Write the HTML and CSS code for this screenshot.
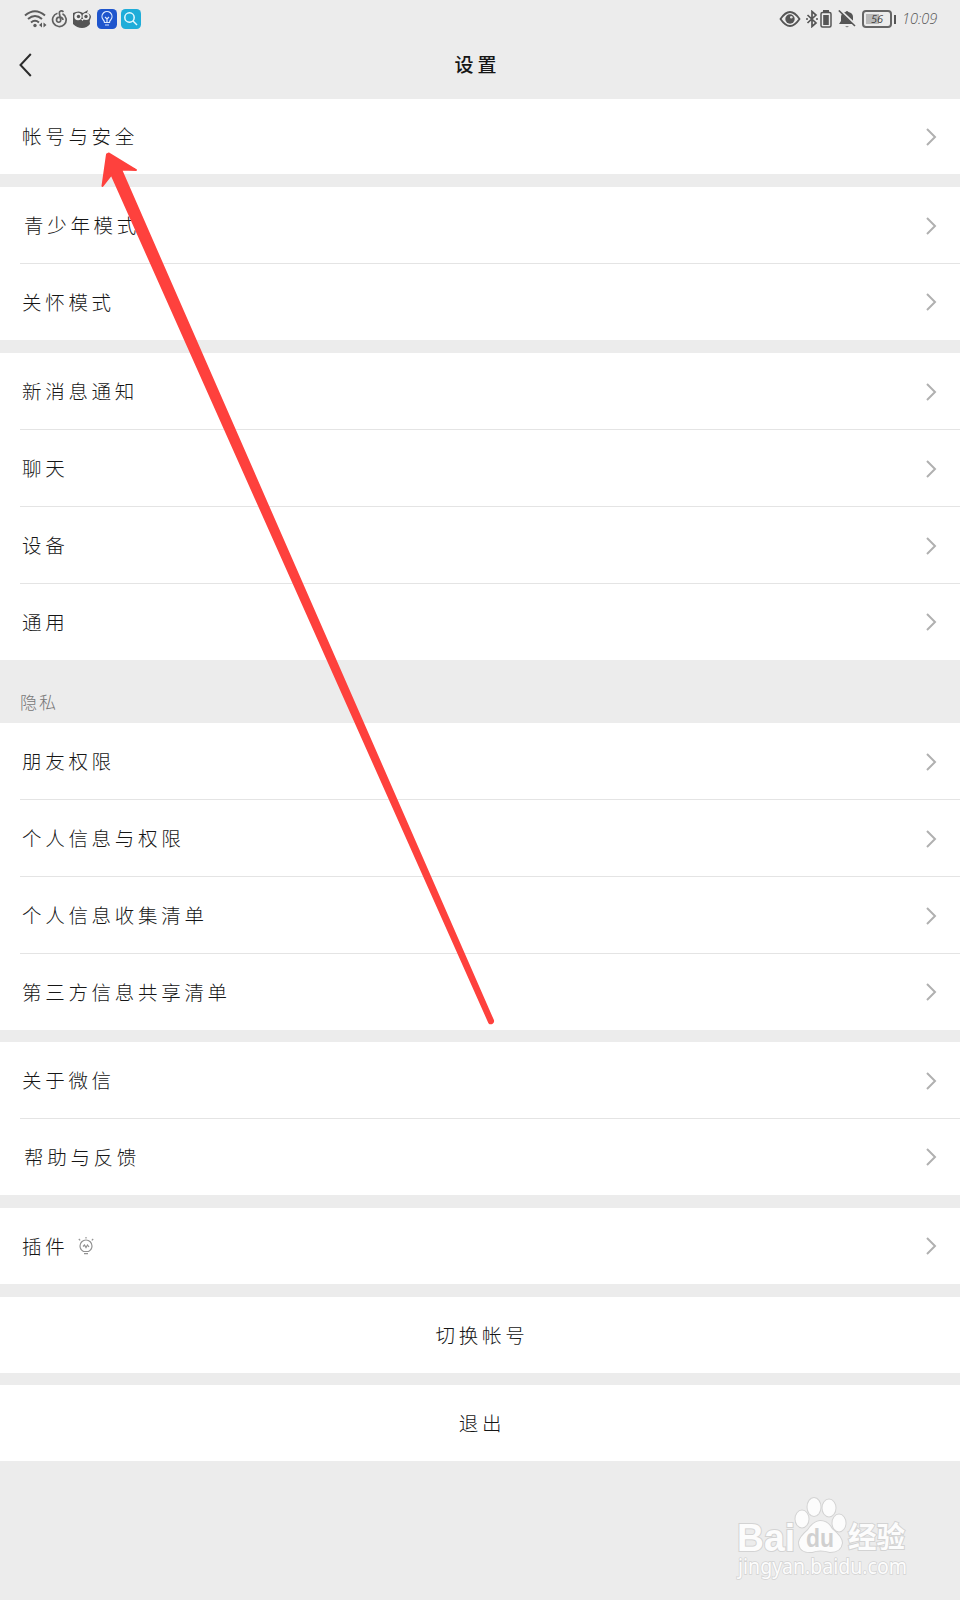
FILE: index.html
```html
<!DOCTYPE html>
<html lang="zh-CN">
<head>
    <meta charset="UTF-8">
    <meta name="viewport" content="width=device-width, initial-scale=1.0">
    <title>设置</title>
    <link rel="stylesheet" href="styles.css">
</head>
<body>
    <svg class="symbols" width="0" height="0">
        <symbol id="chevron" viewBox="0 0 12 20">
            <path d="M2 2l8 8-8 8" fill="none" stroke="#b0b0b0" stroke-width="2"/>
        </symbol>
    </svg>

    <div class="status-bar">
        <div class="status-left">
            <svg class="wifi" width="23" height="20" viewBox="0 0 23 20" fill="none" stroke="#5c5c5c" stroke-width="2">
                <path d="M1 6.500Q11 -2 21 6.500M4 10Q11 4 18 10M7 13.500Q11 10 15 13.500"/>
                <circle cx="11" cy="16.500" r="1.700" fill="#5c5c5c" stroke="none"/>
                <path d="M18 13.500v5l-3-2.500zM19.500 13.500v5l3-2.500z" fill="#5c5c5c" stroke="none"/>
            </svg>
            <svg width="17" height="20" viewBox="0 0 17 20" fill="none" stroke="#606060" stroke-width="1.700">
                <path d="M6.500 4.200A6.800 6.800 0 1 0 11.500 4.700M12.500 2.800C10.500 1 8 2 8.400 4.500L9.700 11C10 14 5.500 14 5.500 11C5.500 7.500 11.500 7 12 11"/>
            </svg>
            <svg width="20" height="20" viewBox="0 0 20 20">
                <path d="M1 4Q7 1 11 4L16 1l-1 3q4 1 4 4-2 4-1 7-3 4-8 4T1 15z" fill="#555"/>
                <circle cx="6" cy="7.500" r="3.700" fill="#eee"/>
                <circle cx="14" cy="7.500" r="3.500" fill="#eee"/>
                <circle cx="6.500" cy="7.500" r="1.700" fill="#555"/>
                <circle cx="14" cy="7.500" r="1.700" fill="#555"/>
                <path d="M9 10l1.500 2 1.500-2z" fill="#eee"/>
            </svg>
            <svg class="app" width="20" height="20" viewBox="0 0 20 20" fill="none" stroke="#dbe9ff" stroke-width="1.200">
                <rect width="20" height="20" rx="4.500" fill="#1e55cd" stroke="none"/>
                <path d="M7.500 13.500Q7.500 12 6 10.500A5 5 0 1 1 14 10.500Q12.500 12 12.500 13.500zM8 16h4M8 8l2 2 2-2M10 10v3"/>
            </svg>
            <svg class="app" width="20" height="20" viewBox="0 0 20 20" fill="none" stroke="#e8faff" stroke-width="1.500">
                <rect width="20" height="20" rx="4.500" fill="#1fadd9" stroke="none"/>
                <circle cx="8.500" cy="8.500" r="4.700"/>
                <path d="M12 12l4 4"/>
            </svg>
        </div>
        <div class="status-right">
            <svg width="22" height="18" viewBox="0 0 22 18">
                <path d="M1.500 9Q11 -5 20.500 9Q11 23 1.500 9z" fill="none" stroke="#555" stroke-width="1.800"/>
                <circle cx="11" cy="9" r="4.700" fill="#555"/>
                <circle cx="12.300" cy="7.300" r="1.300" fill="#ddd"/>
            </svg>
            <svg class="bluetooth" width="12" height="18" viewBox="0 0 12 18" fill="none" stroke="#555" stroke-width="1.700">
                <path d="M1.500 5l8.500 8-4 3.500v-15L10 5l-8.500 8"/>
                <path d="M0 9h2M10 9h2"/>
            </svg>
            <svg class="phone-battery" width="12" height="18" viewBox="0 0 12 18">
                <path d="M3 0h6v2H3z" fill="#555"/>
                <rect x="1" y="2.500" width="10" height="14.500" rx="1.500" fill="none" stroke="#555" stroke-width="1.500"/>
                <path d="M3.200 5h5.600v10H3.200z" fill="#555"/>
            </svg>
            <svg class="bell" width="18" height="18" viewBox="0 0 18 18">
                <path d="M1 14l2-3V7q0-4 4.500-5 1.500-2 3 0Q15 3 15 7v4l2 3z" fill="#555"/>
                <path d="M7 16h4l-2 1.500z" fill="#888"/>
                <path d="M1.800 0l16 15" stroke="#ececec" stroke-width="2.500"/>
                <path d="M.800 .500l16.200 15.500" stroke="#555" stroke-width="1.600"/>
            </svg>
            <div class="battery"><span>56</span></div>
            <div class="time">10:09</div>
        </div>
    </div>

    <div class="nav">
        <svg class="back" width="13" height="24" viewBox="0 0 13 24">
            <path d="M11.800 1L1.500 12l10.300 11" fill="none" stroke="#2c2c2c" stroke-width="2"/>
        </svg>
        <h1>设置</h1>
    </div>

    <div class="group first">
        <div class="row"><span>帐号与安全</span><svg class="chevron"><use href="#chevron"/></svg></div>
    </div>

    <div class="group">
        <div class="row indent"><span>青少年模式</span><svg class="chevron"><use href="#chevron"/></svg></div>
        <div class="row"><span>关怀模式</span><svg class="chevron"><use href="#chevron"/></svg></div>
    </div>

    <div class="group">
        <div class="row"><span>新消息通知</span><svg class="chevron"><use href="#chevron"/></svg></div>
        <div class="row"><span>聊天</span><svg class="chevron"><use href="#chevron"/></svg></div>
        <div class="row"><span>设备</span><svg class="chevron"><use href="#chevron"/></svg></div>
        <div class="row"><span>通用</span><svg class="chevron"><use href="#chevron"/></svg></div>
    </div>

    <div class="group-title">隐私</div>
    <div class="group privacy">
        <div class="row"><span>朋友权限</span><svg class="chevron"><use href="#chevron"/></svg></div>
        <div class="row"><span>个人信息与权限</span><svg class="chevron"><use href="#chevron"/></svg></div>
        <div class="row"><span>个人信息收集清单</span><svg class="chevron"><use href="#chevron"/></svg></div>
        <div class="row"><span>第三方信息共享清单</span><svg class="chevron"><use href="#chevron"/></svg></div>
    </div>

    <div class="group about">
        <div class="row"><span>关于微信</span><svg class="chevron"><use href="#chevron"/></svg></div>
        <div class="row indent"><span>帮助与反馈</span><svg class="chevron"><use href="#chevron"/></svg></div>
    </div>

    <div class="group">
        <div class="row">
            <span>插件</span>
            <svg class="bulb" width="16" height="18" viewBox="0 0 16 18" fill="none" stroke="#929292" stroke-width="1.200">
                <path d="M5.500 14.500Q2 12.500 2 9a6 6 0 0 1 12 0q0 3.500-3.500 5.500zM6 16.700h4M8 0v1.500M.800 2l1.400 1.400M15.200 2l-1.400 1.400M5 9.500L6.500 8l1.500 2.500L9.500 8l1.500 2"/>
            </svg>
            <svg class="chevron"><use href="#chevron"/></svg>
        </div>
    </div>

    <div class="group">
        <div class="row center"><span>切换帐号</span></div>
    </div>

    <div class="group logout">
        <div class="row center"><span>退出</span></div>
    </div>

    <svg class="arrow" width="960" height="1600" viewBox="0 0 960 1600">
        <path d="M109 153.500L136 170L121 169.500L493 1020.500A2.200 2.200 0 0 1 489.200 1022.500L111.500 174.500L102.500 186L107 154.500Z" fill="#fe413d" stroke="#fe413d" stroke-width="2" stroke-linejoin="round"/>
    </svg>

    <div class="watermark">
        <svg width="180" height="95" viewBox="0 0 180 95">
            <g class="mark">
                <text class="bai" x="2" y="56" textLength="58" lengthAdjust="spacingAndGlyphs">Bai</text>
                <ellipse cx="67" cy="24" rx="6.500" ry="8.500"/>
                <ellipse cx="79" cy="12" rx="6.500" ry="9"/>
                <ellipse cx="94" cy="13" rx="6.500" ry="8.500"/>
                <ellipse cx="104" cy="28" rx="6.500" ry="8.500"/>
                <path d="M64 47Q65 42 73 35Q78 27 85 26Q93 26 97 34Q107 42 107 48Q106 57 95 57Q85 54 77 57Q64 58 64 47z"/>
                <text class="jingyan" x="113" y="53" textLength="57" lengthAdjust="spacingAndGlyphs">经验</text>
                <text class="url" x="3" y="79" textLength="169" lengthAdjust="spacingAndGlyphs">jingyan.baidu.com</text>
            </g>
            <text class="du" x="71" y="52" textLength="28" lengthAdjust="spacingAndGlyphs">du</text>
        </svg>
    </div>
</body>
</html>
```
FILE: styles.css
```css
* {
    box-sizing: border-box;
}

body {
    position: relative;
    margin: 0;
    height: 1600px;
    overflow: hidden;
    background-color: #ececec;
    color: #161616;
    font-family: 'Noto Sans CJK SC', sans-serif;
}

svg {
    display: block;
    flex: none;
}

.symbols {
    display: none;
}

.status-bar {
    display: flex;
    justify-content: space-between;
    height: 37px;
    padding: 0 21px 0 24px;
}

.status-left,
.status-right {
    display: flex;
    align-items: center;
}

.status-left {
    gap: 4px;
}

.status-left .app {
    margin-left: 1px;
}

.status-left .app + .app {
    margin-left: 0;
}

.bluetooth {
    margin-left: 5px;
}

.phone-battery {
    margin-left: 2px;
}

.bell {
    margin-left: 6px;
}

.battery {
    position: relative;
    width: 30px;
    height: 18px;
    margin-left: 6px;
    margin-right: 1px;
    padding: 2px;
    border: 2px solid #666;
    border-radius: 4px;
}

.battery::after {
    content: '';
    position: absolute;
    top: 3px;
    right: -6px;
    width: 2px;
    height: 9px;
    background-color: #555;
}

.battery span {
    display: block;
    height: 10px;
    background: linear-gradient(to right, #b9b9b9 60%, transparent 60%);
    color: #444;
    font: italic 11px/10px 'Open Sans', sans-serif;
    text-align: center;
}

.time {
    width: 37px;
    margin-left: 9px;
    color: #555;
    font: italic 300 14.5px/20px 'Open Sans', sans-serif;
    white-space: nowrap;
}

.nav {
    display: flex;
    align-items: center;
    height: 62px;
    padding: 0 20px 6px 19px;
}

.nav h1 {
    flex: 1;
    margin: 0;
    padding: 0 21px 3px 4px;
    font-size: 19px;
    font-weight: 500;
    letter-spacing: 4px;
    text-align: center;
}

.group {
    margin-bottom: 13px;
    background-color: #fff;
}

.row {
    position: relative;
    display: flex;
    align-items: center;
    height: 77px;
    padding: 0 22px;
    font-size: 19.5px;
    font-weight: 300;
    letter-spacing: 3.7px;
}

.row span {
    padding-bottom: 2px;
}

.row:last-child {
    height: 76px;
}

.first .row {
    height: 75px;
}

.row:not(:last-child)::after {
    content: '';
    position: absolute;
    right: 0;
    bottom: 0;
    left: 20px;
    height: 1px;
    background-color: #e4e4e4;
}

.row.indent {
    padding-left: 24px;
}

.chevron {
    width: 12px;
    height: 20px;
    margin-left: auto;
    margin-right: 1px;
}

.group-title {
    height: 63px;
    margin-top: -13px;
    padding: 29px 20px 0;
    color: #777;
    font-size: 17px;
    font-weight: 300;
    letter-spacing: 2px;
    line-height: 25px;
}

.privacy {
    margin-bottom: 12px;
}

.center {
    justify-content: center;
    padding-left: 26px;
}

.bulb {
    margin-left: 10px;
}

.group:has(+ .logout) {
    margin-bottom: 12px;
}

.arrow {
    position: absolute;
    top: 0;
    left: 0;
}

.watermark {
    position: absolute;
    top: 1495px;
    left: 735px;
}

.mark {
    fill: #fcfcfc;
    stroke: #d3d3d3;
    stroke-width: 2px;
    paint-order: stroke;
}

.bai {
    font: bold 38px 'Liberation Sans', sans-serif;
}

.du {
    fill: #d0d0d0;
    font: bold 25px 'Liberation Sans', sans-serif;
}

.jingyan {
    font: bold 29px 'Noto Sans CJK SC', sans-serif;
}

.url {
    stroke-width: 1.5px;
    font: 21px 'Noto Sans', sans-serif;
}
```
